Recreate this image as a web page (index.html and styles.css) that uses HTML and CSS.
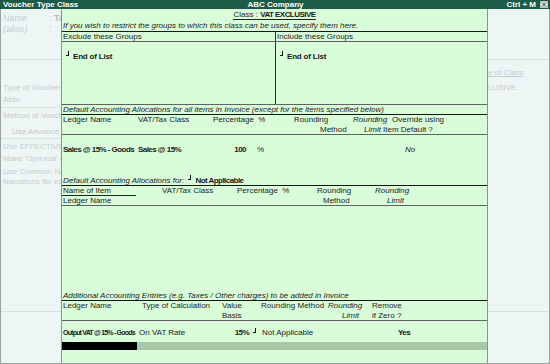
FILE: index.html
```html
<!DOCTYPE html>
<html lang="en">
<head>
  <meta charset="UTF-8">
  <title>Voucher Type Class</title>
  <link rel="stylesheet" href="styles.css">
</head>
<body>
  <div class="window">
    <div class="titlebar">
      <span class="title">Voucher Type Class</span>
      <span class="company">ABC Company</span>
      <span class="keys">Ctrl + M
        <svg class="close" width="8" height="7" viewBox="0 0 8 7">
          <rect x="0.5" y="0.5" width="7" height="6" fill="#e4e8e8" stroke="#b8c0c0"/>
          <path d="M2 1.5 L6 5.5 M6 1.5 L2 5.5" stroke="#333" stroke-width="1"/>
        </svg>
      </span>
    </div>

    <div class="screen">
      <!-- faded screen behind the sub form -->
      <div class="side left">
        <div class="lsec s1">
          <div class="kv big"><span>Name</span><span>: <b>Tax Invoice</b></span></div>
          <div class="kv big"><i>(alias)</i><span>:</span></div>
        </div>
        <div class="lsec s2">
          <div class="ln">Type of Voucher</div>
          <div class="ln">Abbr.</div>
        </div>
        <div class="lsec s3">
          <div class="ln">Method of Voucher Numbering</div>
          <div class="ln indent">Use Advance Configuration</div>
        </div>
        <div class="lsec s4">
          <div class="ln">Use EFFECTIVE Dates for Vouchers</div>
          <div class="ln">Make 'Optional' as default</div>
          <div class="wrap">Use Common Narration<br>Narrations for each entry</div>
        </div>
      </div>

      <div class="panel">
        <div class="sec dark head">
          <div class="cls"><span class="cls-name">Class : <b>VAT EXCLUSIVE</b></span></div>
          <div class="note">If you wish to restrict the groups to which this class can be used, specify them here.</div>
        </div>

        <div class="sec split grp-title">
          <div>Exclude these Groups</div>
          <div>Include these Groups</div>
        </div>
        <div class="sec split grp-list">
          <div><span class="mark"></span><b>End of List</b></div>
          <div><span class="mark"></span><b>End of List</b></div>
        </div>

        <div class="sec dark caption">Default Accounting Allocations for all items in Invoice (except for the items specified below)</div>
        <div class="sec thead">
          <div class="row r1 t1a"><span>Ledger Name</span><span>VAT/Tax Class</span><span>Percentage&nbsp; %</span><span>Rounding</span><i>Rounding</i><span>Override using</span></div>
          <div class="row r2 t1b"><span></span><span>Method</span><i>Limit</i><span>Item Default ?</span></div>
        </div>
        <div class="sec dark data1">
          <div class="row t1d"><b>Sales @ 15% - Goods</b><b>Sales @ 15%</b><b class="num">100</b><span>%</span><i>No</i></div>
          <div class="for-line"><i>Default Accounting Allocations for:</i> <span class="mark"></span><b>Not Applicable</b></div>
        </div>

        <div class="sec thead">
          <div class="row r1 t2a"><span class="uline">Name of Item</span><span>VAT/Tax Class</span><span>Percentage&nbsp; %</span><span>Rounding</span><i>Rounding</i></div>
          <div class="row r2 t2b"><span>Ledger Name</span><span>Method</span><i>Limit</i></div>
        </div>
        <div class="sec dark spacer">
          <div class="caption">Additional Accounting Entries (e.g. Taxes / Other charges) to be added in Invoice</div>
        </div>

        <div class="sec thead">
          <div class="row r1 t3a"><span>Ledger Name</span><span>Type of Calculation</span><span>Value</span><span>Rounding Method</span><i>Rounding</i><span>Remove</span></div>
          <div class="row r2 t3b"><span></span><span>Basis</span><i>Limit</i><span>if Zero ?</span></div>
        </div>
        <div class="data3">
          <div class="row t3d"><b class="tight">Output VAT @ 15% - Goods</b><span>On VAT Rate</span><b class="num">15%</b><span class="mk"><span class="mark"></span></span><span>Not Applicable</span><b>Yes</b></div>
          <div class="bar"><span class="cursor"></span><span class="fill"></span></div>
        </div>
      </div>

      <div class="side right">
        <div class="lsec s1"></div>
        <div class="lsec r2">
          <div class="ln"><u class="cut1">Name of Class</u></div>
          <div class="ln cut2">VAT EXCLUSIVE</div>
        </div>
      </div>
    </div>
  </div>
</body>
</html>
```

FILE: styles.css
```css
* {
  box-sizing: border-box;
}

body {
  margin: 0;
  font-family: "Liberation Sans", Arial, sans-serif;
  font-size: 8px;
  color: #1a1a1a;
}

.window {
  width: 550px;
  height: 364px;
  display: flex;
  flex-direction: column;
  overflow: hidden;
  background: #eef5f5;
}

/* title bar */
.titlebar {
  height: 9px;
  line-height: 9px;
  background: #1d5a48;
  color: #fff;
  font-weight: bold;
  display: grid;
  grid-template-columns: 1fr auto 1fr;
  padding: 0 2px 0 3px;
  white-space: nowrap;
}

.keys {
  justify-self: end;
  display: flex;
  align-items: center;
  gap: 4px;
}

.close {
  display: block;
}

.screen {
  flex: 1;
  display: flex;
  border: 1px solid #9aa2a2;
  border-top: none;
  min-height: 0;
}

/* faded background screen */
.side {
  color: #c4cece;
  overflow: hidden;
  white-space: nowrap;
}

.side.left {
  width: 60px;
}

.side.right {
  flex: 1;
}

.lsec {
  border-bottom: 1px solid #d8e0e0;
  padding-left: 2px;
}

.lsec.s1 {
  height: 51px;
  padding-top: 4px;
}

.lsec.s2 {
  height: 48px;
  padding-top: 22px;
}

.lsec.s3 {
  height: 31px;
  padding-top: 2px;
}

.lsec.s4 {
  height: 173px;
  padding-top: 2px;
}

.lsec.r2 {
  height: 252px;
  padding: 7px 0 0 0;
}

.kv {
  display: grid;
  grid-template-columns: 46px auto;
  line-height: 11px;
}

.big {
  font-size: 9px;
}

.kv b {
  color: #b4bebe;
}

.ln {
  line-height: 12px;
}

.indent {
  padding-left: 9px;
  margin-top: 4px;
}

.wrap {
  line-height: 10px;
  margin-top: 2px;
}

.cut1 {
  margin-left: -17px;
  display: inline-block;
}

.cut2 {
  margin-left: -33px;
  margin-top: 3px;
}

/* green sub form */
.panel {
  width: 427px;
  background: #d9fcd9;
  border-left: 1px solid #8a9090;
  border-right: 1px solid #8a9090;
  display: flex;
  flex-direction: column;
  white-space: nowrap;
}

.panel b {
  letter-spacing: -0.55px;
}

.sec {
  border-bottom: 1px solid #5e6464;
}

.sec.dark {
  border-bottom-color: #161616;
}

.head {
  height: 23px;
}

.cls {
  height: 10px;
  margin-top: 1px;
  display: flex;
  justify-content: center;
}

.cls-name {
  line-height: 9px;
  border-bottom: 1px solid #222;
  padding: 0 1px;
}

.note {
  font-style: italic;
  line-height: 11px;
  padding-left: 1px;
}

.split {
  display: grid;
  grid-template-columns: 214px 1fr;
}

.split > div:first-child {
  border-right: 1px solid #2a2a2a;
  padding-left: 1px;
}

.split > div:last-child {
  padding-left: 1px;
}

.grp-title {
  height: 10px;
  line-height: 9px;
}

.grp-list {
  height: 63px;
}

.grp-list > div {
  padding-top: 9px;
  line-height: 10px;
}

.grp-list .mark {
  margin: 0 4px 0 3px;
}

.grp-list b {
  letter-spacing: -0.2px;
}

.mark {
  display: inline-block;
  width: 3px;
  height: 5px;
  border-right: 1px solid #111;
  border-bottom: 1px solid #111;
  vertical-align: 3px;
}

.caption {
  font-style: italic;
  line-height: 9px;
  padding-left: 1px;
}

.sec.caption {
  height: 10px;
}

.thead {
  height: 20px;
  color: #222;
}

.row {
  display: grid;
  padding-left: 1px;
}

.r1 {
  line-height: 10px;
  height: 10px;
}

.r2 {
  line-height: 9px;
}

.t1a { grid-template-columns: 75px 75px 81px 59px 39px 1fr; }
.t1b { grid-template-columns: 257px 44px 19px 1fr; }
.t1d { grid-template-columns: 75px 75px 44px 148px 1fr; line-height: 10px; }

.t2a { grid-template-columns: 99px 75px 80px 58px 1fr; }
.t2b { grid-template-columns: 260px 64px 1fr; }

.t3a { grid-template-columns: 79px 80px 39px 67px 44px 1fr; }
.t3b { grid-template-columns: 159px 120px 30px 1fr; }
.t3d { grid-template-columns: 76px 78px 32px 13px 136px 1fr; line-height: 10px; }

.num {
  text-align: right;
}

.t1d .num {
  padding-right: 11px;
}

.uline {
  width: 74px;
  margin-left: -1px;
  padding-left: 1px;
  line-height: 9px;
  border-bottom: 1px solid #222;
}

.data1 {
  height: 51px;
  padding-top: 10px;
}

.for-line {
  margin-top: 20px;
  line-height: 10px;
  padding-left: 1px;
}

.for-line .mark {
  margin: 0 4px 0 2px;
}

.spacer {
  height: 95px;
  display: flex;
  flex-direction: column;
  justify-content: flex-end;
}

.data3 {
  flex: 1;
  padding-top: 7px;
}

.panel .tight {
  font-size: 7px;
  letter-spacing: -0.8px;
}

.mk {
  padding-left: 4px;
}

.bar {
  display: grid;
  grid-template-columns: 75px 1fr;
  height: 8px;
  margin-top: 3px;
}

.cursor {
  background: #000;
}

.fill {
  background: #a8c8a8;
}
```
